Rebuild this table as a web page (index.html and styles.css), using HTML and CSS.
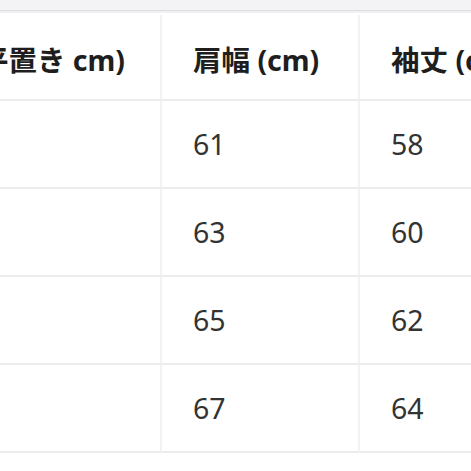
FILE: index.html
```html
<!DOCTYPE html>
<html lang="ja">
<head>
<meta charset="utf-8">
<title>サイズ表</title>
<link rel="stylesheet" href="styles.css">
</head>
<body>
<div class="topbar"></div>
<div class="size-table">
  <div class="cell head first"><span>身幅 (平置き cm)</span></div>
  <div class="cell head"><span>肩幅 (cm)</span></div>
  <div class="cell head last"><span>袖丈 (cm)</span></div>

  <div class="cell first"></div>
  <div class="cell">61</div>
  <div class="cell last">58</div>

  <div class="cell first"></div>
  <div class="cell">63</div>
  <div class="cell last">60</div>

  <div class="cell first"></div>
  <div class="cell">65</div>
  <div class="cell last">62</div>

  <div class="cell first"></div>
  <div class="cell">67</div>
  <div class="cell last">64</div>
</div>
</body>
</html>
```
FILE: styles.css
```css
html, body {
  margin: 0;
  padding: 0;
  background: #ffffff;
  overflow: hidden;
}
body {
  font-family: "Noto Sans", "Noto Sans CJK JP", sans-serif;
  width: 471px;
  height: 471px;
}
.topbar {
  height: 10px;
  background: #f3f3f5;
  border-bottom: 1px solid #dedee0;
  box-shadow: 0 2px 0 #f0f0f2;
}
.size-table {
  margin-top: 4px;
  display: grid;
  grid-template-columns: 162px 198px 1fr;
  grid-template-rows: 86px;
  grid-auto-rows: 88px;
}
.cell {
  display: flex;
  align-items: center;
  font-size: 28.5px;
  color: #333333;
  padding-left: 31px;
  border-bottom: 2px solid #ececec;
  border-right: 2px solid #f2f2f2;
  white-space: nowrap;
  overflow: hidden;
  min-width: 0;
}
.cell.head {
  font-weight: 700;
  color: #1e1e1e;
  padding-top: 2px;
}
.cell.first {
  justify-content: flex-end;
  padding-left: 0;
  padding-right: 35px;
}
.cell.last {
  border-right: none;
}
```
